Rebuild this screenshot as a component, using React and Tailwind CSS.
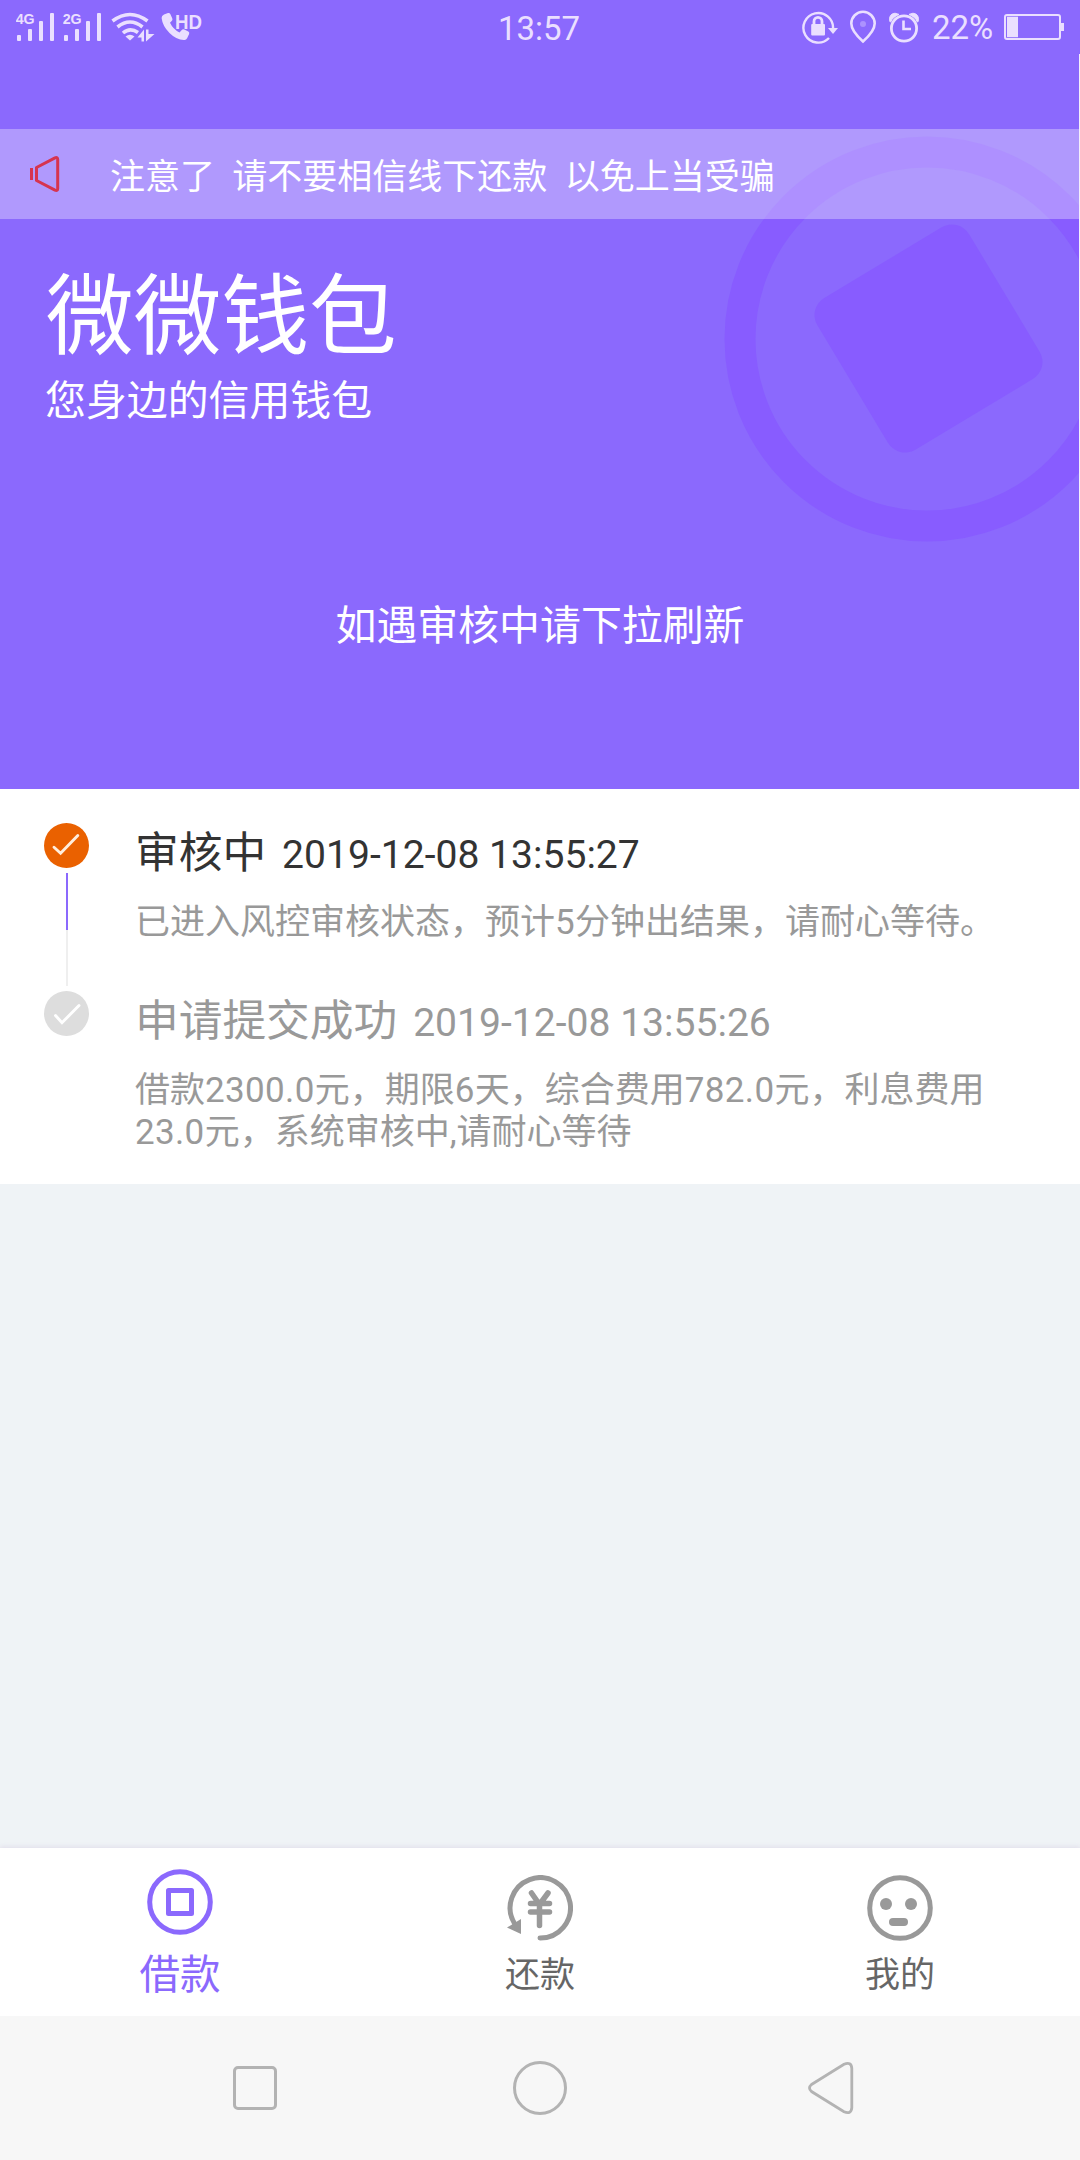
const steps = [
  {
    title: '审核中',
    time: '2019-12-08 13:55:27',
    text: '已进入风控审核状态，预计5分钟出结果，请耐心等待。',
    active: true,
  },
  {
    title: '申请提交成功',
    time: '2019-12-08 13:55:26',
    text: '借款2300.0元，期限6天，综合费用782.0元，利息费用23.0元，系统审核中,请耐心等待',
    active: false,
  },
]

function Signal({ label }) {
  return (
    <svg className="w-[40px] h-[32px]" viewBox="0 0 40 32" fill="currentColor">
      <text x="-0.3" y="13" fontSize="15" fontWeight="700" textLength="19" lengthAdjust="spacingAndGlyphs" fontFamily="Liberation Sans, sans-serif">{label}</text>
      <rect x="1" y="24" width="4" height="6" rx="1" />
      <rect x="12" y="18" width="4" height="12" rx="1" />
      <rect x="23" y="10" width="4" height="20" rx="1" />
      <rect x="34" y="2" width="4" height="28" rx="1" />
    </svg>
  )
}

function WifiIcon() {
  return (
    <svg className="w-[46px] h-[32px]" viewBox="0 0 46 32" fill="none" stroke="currentColor" strokeWidth="3.6">
      <path d="M1.500 10Q19 -3 36.500 10" />
      <path d="M6.500 16Q19 6 31.500 16" />
      <path d="M12 22Q19 16 27 21.500" />
      <path d="M19 29.500l-4.500-4q4.500-3.500 9 0z" fill="currentColor" stroke="none" />
      <path d="M26.500 26.500L33 18.500v12h-2.500v-4zM35 30.500V18.500h2.500v4.500H43.500z" fill="currentColor" stroke="none" />
    </svg>
  )
}

function CallHdIcon() {
  return (
    <svg className="w-[42px] h-[32px]" viewBox="0 0 42 32" fill="currentColor">
      <path d="M3 3.500L7 2q1.500-.5 2.300 1l2 4.500q.6 1.500-.6 2.500L9 11.800q3 6.500 9.500 9.700l2.300-2.600q1-1.200 2.500-.5l4 2.200q1.400.9.800 2.400l-2 4.300q-.9 1.800-3 1.600Q15.500 29 8.500 22T.6 7q-.1-2.500 2.400-3.500z" />
      <text x="14" y="18" fontSize="19.500" fontWeight="700" textLength="27" lengthAdjust="spacingAndGlyphs" fontFamily="Liberation Sans, sans-serif">HD</text>
    </svg>
  )
}

function LockRotateIcon() {
  return (
    <svg className="w-[38px] h-[34px]" viewBox="0 0 38 34" fill="none" stroke="currentColor" strokeWidth="2.400">
      <path d="M31 19A14.800 14.800 0 1 0 27 28" />
      <path d="M26 18h10l-5 6z" fill="currentColor" stroke="none" />
      <rect x="9.200" y="14" width="13.800" height="11.500" rx="1" fill="currentColor" stroke="none" />
      <path d="M12 15v-3.500a4 4.200 0 0 1 8 0V15" strokeWidth="2.800" />
    </svg>
  )
}

function PinIcon() {
  return (
    <svg className="w-[28px] h-[34px]" viewBox="0 0 28 34" fill="none" stroke="currentColor" strokeWidth="2.600">
      <path d="M14 31.500Q2.300 21 2.300 13.500a11.700 11.700 0 0 1 23.400 0Q25.700 21 14 31.500z" />
      <circle cx="14" cy="14" r="3" fill="currentColor" stroke="none" opacity="0.350" />
    </svg>
  )
}

function AlarmIcon() {
  return (
    <svg className="w-[32px] h-[34px]" viewBox="0 0 32 34" fill="none" stroke="currentColor" strokeWidth="2.800">
      <circle cx="16" cy="18.500" r="12.600" />
      <path d="M15.500 10.500v8.500h7.500" strokeWidth="2.600" />
      <path d="M1.800 11.500Q.3 4 7 3.200l4 1.200Q4.500 7 2.700 12zM30.200 11.500Q31.700 4 25 3.200l-4 1.200Q27.500 7 29.300 12z" fill="currentColor" strokeWidth="1" />
    </svg>
  )
}

function BatteryIcon() {
  return (
    <svg className="w-[61px] h-[28px]" viewBox="0 0 61 28" fill="currentColor">
      <rect x="1" y="2" width="55" height="24" rx="2" fill="none" stroke="currentColor" strokeWidth="2" />
      <rect x="3" y="3.700" width="11" height="20.500" />
      <rect x="57" y="10" width="3" height="8" />
    </svg>
  )
}

function StatusBar() {
  return (
    <div className="relative h-[54px] flex justify-between text-[#eadfff]">
      <div className="flex items-start pt-[11px] pl-4">
        <Signal label="4G" />
        <div className="w-[7px]" />
        <Signal label="2G" />
        <div className="w-[8px]" />
        <WifiIcon />
        <div className="w-1" />
        <CallHdIcon />
      </div>
      <div className="absolute left-0 right-[2px] top-[9px] text-center text-[33px] leading-[39px]">13:57</div>
      <div className="flex items-start pt-[10px] pr-[15px]">
        <LockRotateIcon />
        <div className="w-[9px]" />
        <PinIcon />
        <div className="w-[11px]" />
        <AlarmIcon />
        <span className="w-[84px] pl-[12px] -mt-[2px] text-[33px] leading-[39px]">22%</span>
        <div className="pt-[3px]"><BatteryIcon /></div>
      </div>
    </div>
  )
}

function Coin() {
  return (
    <svg className="absolute left-[724px] top-[136px] w-[355px] h-[407px]" viewBox="0 0 355 407">
      <circle cx="203" cy="203" r="187" fill="none" stroke="#885cff" strokeWidth="31" />
      <rect x="116" y="114" width="177" height="177" rx="20" fill="#885cff" transform="rotate(-31 204.500 202.500)" />
    </svg>
  )
}

function Header() {
  return (
    <header className="relative h-[789px] bg-[#8b69fd] text-white overflow-hidden">
      <Coin />
      <StatusBar />
      {/* light edge the web view leaves on the right */}
      <div className="absolute right-0 top-[54px] bottom-0 w-px bg-[#f3effc]" />
      <div className="relative mt-[75px] h-[90px] w-[1079px] bg-white/32 flex items-center pl-[29px]">
        <svg className="w-[32px] h-[38px]" viewBox="0 0 32 38" fill="none" stroke="#d6344f" strokeWidth="3" strokeLinejoin="round">
          <path d="M2.500 13v12M7.500 12.500v13L26 35.200q2.700 1 2.700-1.800V4.600q0-2.800-2.700-1.800z" />
        </svg>
        <p className="ml-[49px] pt-[7px] text-[35px] leading-[50px] whitespace-pre">注意了  请不要相信线下还款  以免上当受骗</p>
      </div>
      <div className="relative pl-[46px] pt-[43px]">
        <h1 className="text-[87.700px] leading-[110px]">微微钱包</h1>
        <p className="-ml-px mt-[2px] text-[40.900px] leading-[54px]">您身边的信用钱包</p>
      </div>
      <p className="mt-[171px] text-center text-[40.900px] leading-[54px]">如遇审核中请下拉刷新</p>
    </header>
  )
}

function Check({ active }) {
  return (
    <svg className="w-[45px] h-[45px]" viewBox="0 0 45 45" fill="none">
      <circle cx="22.500" cy="22.500" r="22.500" fill={active ? '#ea6100' : '#dddddd'} />
      <path
        d={active ? 'M10 24.300l6.600 6L33.800 12.500' : 'M11.500 24.500l6.500 7.200L35 14.500'}
        stroke={active ? '#ffeedd' : '#fff'}
        strokeWidth="2.900"
        strokeLinecap="round"
      />
    </svg>
  )
}

function Step({ title, time, text, active }) {
  // numbers are spaced a little wider than the text around them
  const parts = text.split(/(\d[\d.]*)/)

  return (
    <li className={active ? 'flex h-[168px]' : 'flex'}>
      <div className="w-[45px] flex flex-col items-center">
        <Check active={active} />
        {active && (
          <>
            <div className="mt-[5px] w-[2px] h-[57px] bg-[#8b69fd]" />
            <div className="w-[2px] h-[56px] bg-[#efefef]" />
          </>
        )}
      </div>
      <div className="ml-[46px] w-[870px]">
        <div className={active ? 'flex items-baseline text-[#333]' : 'flex items-baseline text-[#999]'}>
          <h2 className="pt-px text-[43.700px] leading-[58px]">{title}</h2>
          <span className="ml-[16px] text-[39.100px] leading-[56px]">{time}</span>
        </div>
        <p className="mt-[19px] text-[35px] leading-[42px] text-[#999]">
          {parts.map((part, i) => (
            i % 2 ? <span key={i} className="tracking-[0.350px]">{part}</span> : part
          ))}
        </p>
      </div>
    </li>
  )
}

function LoanIcon() {
  return (
    <svg className="w-[66px] h-[66px]" viewBox="0 0 66 66" fill="none" stroke="#8b69fd" strokeWidth="5">
      <circle cx="33" cy="33" r="30.300" />
      <rect x="21.500" y="21.500" width="23" height="23" strokeLinejoin="round" />
    </svg>
  )
}

function RepayIcon() {
  return (
    <svg className="w-[66px] h-[66px]" viewBox="0 0 66 66" fill="none" stroke="#999" strokeWidth="5" strokeLinecap="round">
      <path d="M33 63A30.200 30.200 0 1 0 7.500 48.500" />
      <path d="M0 52.500L14 44v15z" fill="#999" stroke="none" />
      <path d="M24.500 18l8 11.500L41 18M23.500 28.500h19M23.500 37h19M32.500 29v21.500" strokeWidth="5.500" />
    </svg>
  )
}

function MineIcon() {
  return (
    <svg className="w-[66px] h-[66px]" viewBox="0 0 66 66" fill="#999">
      <circle cx="33" cy="33" r="30.300" fill="none" stroke="#999" strokeWidth="5" />
      <circle cx="19" cy="29" r="6" />
      <circle cx="44" cy="29" r="6" />
      <rect x="22" y="43" width="19" height="8" rx="4" />
    </svg>
  )
}

function TabBar() {
  return (
    <nav className="h-[168px] bg-white grid grid-cols-3 shadow-[0_-1px_5px_rgba(170,130,190,0.2)]">
      <button className="flex flex-col items-center pt-[21px] text-[#8b69fd]">
        <LoanIcon />
        <span className="mt-[13px] text-[40.500px] leading-[54px]">借款</span>
      </button>
      <button className="flex flex-col items-center pt-[27px] text-[#666]">
        <RepayIcon />
        <span className="mt-[8px] text-[35px] leading-[54px]">还款</span>
      </button>
      <button className="flex flex-col items-center pt-[27px] text-[#666]">
        <MineIcon />
        <span className="mt-[8px] text-[35px] leading-[54px]">我的</span>
      </button>
    </nav>
  )
}

function SystemNav() {
  return (
    <div className="h-[144px] bg-[#f7f7f7] flex items-center justify-between pl-[233px] pr-[226px]">
      <div className="size-[44px] rounded-[5px] border-3 border-[#b3b3b3]" />
      <div className="-ml-[5px] size-[54px] rounded-full border-3 border-[#b3b3b3]" />
      <svg className="w-[46px] h-[54px]" viewBox="0 0 46 54" fill="none" stroke="#b3b3b3" strokeWidth="2.800">
        <path d="M3.500 23.500L36 3.300q7.300-3 7.800 4v39.400q-.5 7-7.800 4L3.500 30.500q-4-3.500 0-7z" />
      </svg>
    </div>
  )
}

function App() {
  return (
    <div className="w-[1080px] h-[2160px] flex flex-col overflow-hidden bg-[#eff3f6] font-['Roboto','Noto_Sans_CJK_SC',sans-serif]">
      <Header />
      <ul className="h-[395px] bg-white pl-[44px] pt-[34px]">
        {steps.map((step) => (
          <Step key={step.time} {...step} />
        ))}
      </ul>
      <div className="flex-1" />
      <TabBar />
      <SystemNav />
    </div>
  )
}

export default App
